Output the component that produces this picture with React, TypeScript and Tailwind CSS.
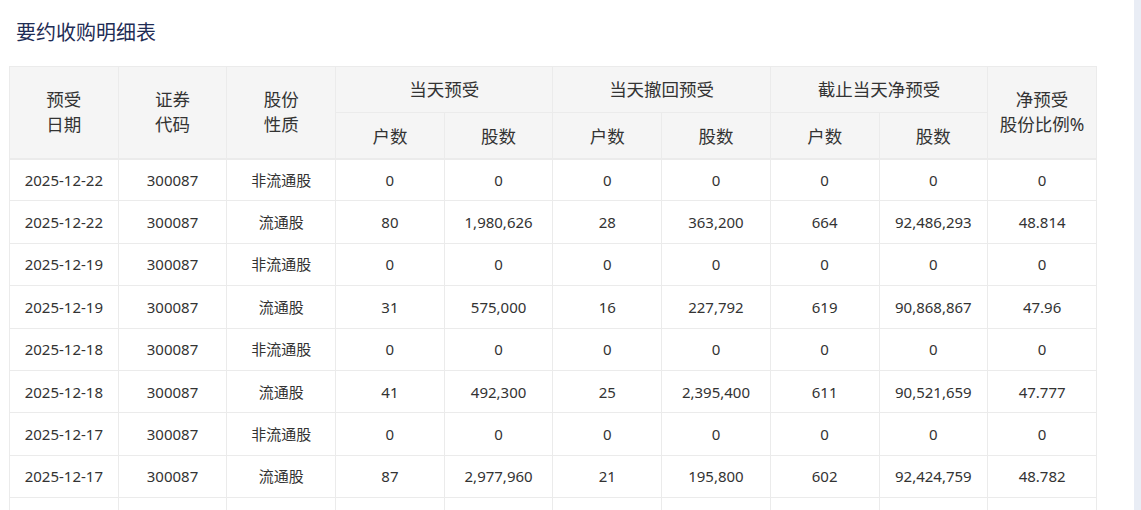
import React from "react";

const rows: string[][] = [
  ["2025-12-22", "300087", "非流通股", "0", "0", "0", "0", "0", "0", "0"],
  ["2025-12-22", "300087", "流通股", "80", "1,980,626", "28", "363,200", "664", "92,486,293", "48.814"],
  ["2025-12-19", "300087", "非流通股", "0", "0", "0", "0", "0", "0", "0"],
  ["2025-12-19", "300087", "流通股", "31", "575,000", "16", "227,792", "619", "90,868,867", "47.96"],
  ["2025-12-18", "300087", "非流通股", "0", "0", "0", "0", "0", "0", "0"],
  ["2025-12-18", "300087", "流通股", "41", "492,300", "25", "2,395,400", "611", "90,521,659", "47.777"],
  ["2025-12-17", "300087", "非流通股", "0", "0", "0", "0", "0", "0", "0"],
  ["2025-12-17", "300087", "流通股", "87", "2,977,960", "21", "195,800", "602", "92,424,759", "48.782"],
];

const th = "border border-[#ebebeb] bg-[#f5f5f5] font-normal text-center align-middle";

export default function App() {
  return (
    <div
      className="flex h-[510px] w-[1141px] overflow-hidden bg-white text-[#333]"
      style={{ fontFamily: '"Noto Sans", "Noto Sans CJK SC", sans-serif' }}
    >
      <div className="flex-1 pl-[9px] pr-[37px]">
        <div className="pl-[7px] pt-[19px] pb-[19px] text-[20px] leading-[28px] text-[#1f2d55]">
          要约收购明细表
        </div>
        <table className="w-[1088px] table-fixed border-collapse">
          <thead className="text-[17.5px] leading-[25px]">
            <tr className="h-[46px]">
              <th rowSpan={2} className={th}>预受<br />日期</th>
              <th rowSpan={2} className={th}>证券<br />代码</th>
              <th rowSpan={2} className={th}>股份<br />性质</th>
              <th colSpan={2} className={th}>当天预受</th>
              <th colSpan={2} className={th}>当天撤回预受</th>
              <th colSpan={2} className={th}>截止当天净预受</th>
              <th rowSpan={2} className={th}>净预受<br />股份比例%</th>
            </tr>
            <tr className="h-[46px] border-b-2 border-[#ebebeb]">
              <th className={th + " pt-[2px]"}>户数</th>
              <th className={th + " pt-[2px]"}>股数</th>
              <th className={th + " pt-[2px]"}>户数</th>
              <th className={th + " pt-[2px]"}>股数</th>
              <th className={th + " pt-[2px]"}>户数</th>
              <th className={th + " pt-[2px]"}>股数</th>
            </tr>
          </thead>
          <tbody className="text-[15px] leading-[20px]">
            {rows.map((r, i) => (
              <tr key={i} className="h-[42.4px]">
                {r.map((c, j) => (
                  <td key={j} className="border border-[#ebebeb] text-center align-middle">
                    {c}
                  </td>
                ))}
              </tr>
            ))}
            <tr className="h-[42.4px]">
              {Array.from({ length: 10 }).map((_, j) => (
                <td key={j} className="border border-[#ebebeb]" />
              ))}
            </tr>
          </tbody>
        </table>
      </div>
      <div className="w-[8px] shrink-0 bg-[#e9edf5]" />
    </div>
  );
}
